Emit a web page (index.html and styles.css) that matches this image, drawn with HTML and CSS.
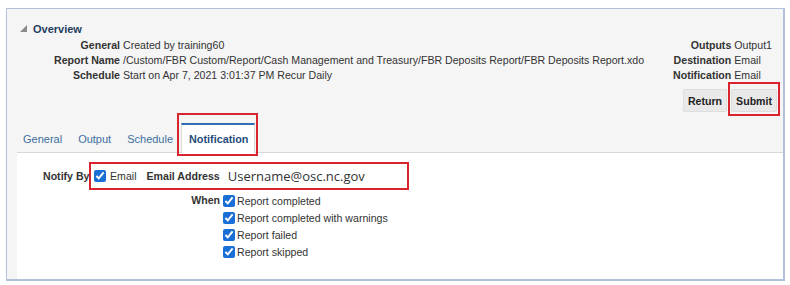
FILE: index.html
```html
<!DOCTYPE html>
<html lang="en">
  <head>
    <meta charset="UTF-8" />
    <meta name="viewport" content="width=device-width, initial-scale=1.0" />
    <title>Schedule Report - Notification</title>
    <link rel="stylesheet" href="styles.css">
  </head>
  <body>
    <div class="frame">
      <div class="overview">
        <div class="overview-title">
          <svg class="twisty" width="7" height="7" viewBox="0 0 7 7"><polygon points="0,7 7,0 7,7" fill="#8a8a8a" /></svg>
          Overview
        </div>
        <div class="details">
          <dl class="info info-left">
            <dt>General</dt><dd>Created by training60</dd>
            <dt>Report Name</dt><dd>/Custom/FBR Custom/Report/Cash Management and Treasury/FBR Deposits Report/FBR Deposits Report.xdo</dd>
            <dt>Schedule</dt><dd>Start on Apr 7, 2021 3:01:37 PM Recur Daily</dd>
          </dl>
          <dl class="info info-right">
            <dt>Outputs</dt><dd>Output1</dd>
            <dt>Destination</dt><dd>Email</dd>
            <dt>Notification</dt><dd>Email</dd>
          </dl>
        </div>
        <div class="actions">
          <button class="btn btn-return" type="button">Return</button>
          <span class="callout-btn"><button class="btn" type="button">Submit</button></span>
        </div>
      </div>

      <nav class="tabs">
        <a class="tab tab-first">General</a>
        <a class="tab">Output</a>
        <a class="tab">Schedule</a>
        <a class="tab active">Notification</a>
      </nav>

      <div class="panel">
        <div class="notify-row">
          <span class="field-label notify-label">Notify By</span>
          <div class="callout-box">
            <input type="checkbox" class="chk" checked />
            <span>Email</span>
            <span class="field-label addr-label">Email Address</span>
            <span class="addr-value">Username@osc.nc.gov</span>
          </div>
        </div>
        <div class="when">
          <span class="field-label when-label">When</span>
          <label class="opt"><input type="checkbox" class="chk" checked />Report completed</label>
          <label class="opt"><input type="checkbox" class="chk" checked />Report completed with warnings</label>
          <label class="opt"><input type="checkbox" class="chk" checked />Report failed</label>
          <label class="opt"><input type="checkbox" class="chk" checked />Report skipped</label>
        </div>
      </div>
    </div>
  </body>
</html>
```

FILE: styles.css
```css
body {
  margin: 0;
  font-family: "Liberation Sans", Arial, sans-serif;
  font-size: 10.6px;
  color: #333;
  background: #fff;
}

.frame {
  box-sizing: border-box;
  width: 779px;
  height: 273px;
  margin: 8px 0 0 6px;
  border: 1px solid #b3c0d9;
  border-right-width: 2px;
  border-bottom-width: 2px;
  background: #f5f5f5;
  display: flex;
  flex-direction: column;
}

.overview {
  padding: 12px 11px 0 13px;
}

.overview-title {
  display: flex;
  align-items: center;
  height: 15px;
  font-size: 11px;
  font-weight: bold;
  color: #1f3d5e;
}

.twisty {
  margin-right: 6px;
}

.details {
  display: flex;
  justify-content: space-between;
  margin-top: 2px;
}

.info {
  display: grid;
  grid-template-columns: auto auto;
  column-gap: 3px;
  margin: 0;
  line-height: 15px;
}

.info dt {
  font-weight: bold;
  text-align: right;
}

.info dd {
  margin: 0;
  white-space: nowrap;
}

.info-left {
  grid-template-columns: 100px auto;
}

.actions {
  display: flex;
  justify-content: flex-end;
  align-items: flex-end;
  margin: -1px -8px 0 0;
}

.btn {
  height: 23px;
  padding: 0 4px;
  font-family: inherit;
  font-size: 10.6px;
  font-weight: bold;
  color: #222;
  background: #e9e9e9;
  border: 1px solid #dedede;
  border-radius: 2px;
}

.btn-return {
  margin-bottom: 4px;
}

.callout-btn {
  display: flex;
  margin-left: 1px;
  padding: 5px 1px 2px 1px;
  border: 2px solid #d9232e;
}

.tabs {
  display: flex;
  align-items: flex-end;
  height: 36px;
  margin-left: 10px;
  border-bottom: 1px solid #d8d8d8;
}

.tab {
  padding: 0 8px 6px;
  line-height: 14px;
  font-size: 11px;
  color: #3d6fa0;
}

.tab-first {
  padding-left: 6px;
}

.tab.active {
  position: relative;
  margin-left: 0;
  margin-bottom: -1px;
  padding: 7px 6px 7px 7px;
  font-size: 10.8px;
  font-weight: bold;
  color: #1f4d7a;
  background: #fff;
  border-top: 2px solid #2f6db5;
  border-left: 1px solid #d8d8d8;
  border-right: 1px solid #d8d8d8;
}

.tab.active::after {
  content: "";
  position: absolute;
  top: -12px;
  left: -5px;
  right: -4px;
  bottom: -3px;
  border: 2px solid #d9232e;
}

.panel {
  flex: 1;
  margin-left: 10px;
  background: #fff;
}

.field-label {
  font-weight: bold;
}

.notify-row {
  display: flex;
  align-items: center;
  margin-top: 9px;
  padding-left: 26px;
}

.notify-label {
  width: 46px;
  white-space: nowrap;
}

.callout-box {
  box-sizing: border-box;
  display: flex;
  align-items: center;
  width: 320px;
  height: 28px;
  padding-left: 3px;
  border: 2px solid #d9232e;
}

.chk {
  width: 12px;
  height: 12px;
  margin: 0 4px 0 0;
  accent-color: #1a6fd6;
}

.addr-label {
  margin-left: 10px;
}

.addr-value {
  margin-left: 8px;
  font-family: "Open Sans", sans-serif;
  font-size: 13px;
  color: #333;
}

.when {
  display: grid;
  grid-template-columns: 203px auto;
  column-gap: 3px;
  margin-top: 2px;
}

.when-label {
  grid-row: 1;
  text-align: right;
  line-height: 17px;
}

.opt {
  grid-column: 2;
  display: flex;
  align-items: center;
  height: 17px;
}

.opt .chk {
  margin-right: 2px;
}
```
